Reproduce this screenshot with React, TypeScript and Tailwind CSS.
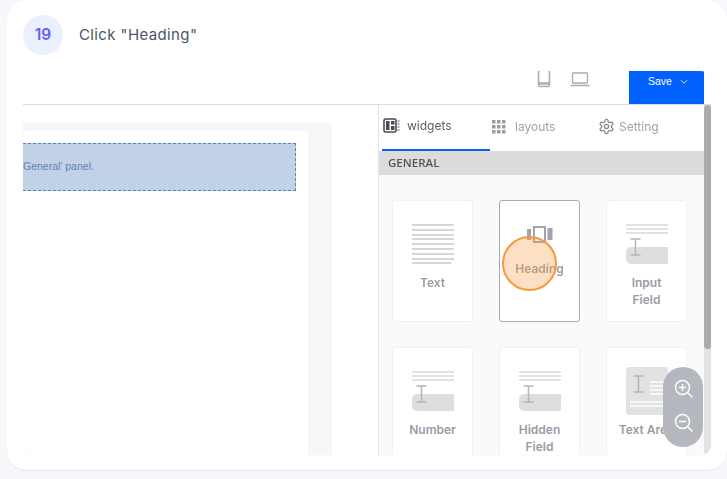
import React from "react";

const labelFont = "font-['Inter',sans-serif] font-semibold text-[12px] leading-[17px] text-[#9b9ba6]";

const Lines: React.FC<{ count: number; color?: string; className?: string }> = ({ count, color, className }) => (
  <div className={`flex flex-col gap-[2px] ${className ?? ""}`}>
    {Array.from({ length: count }).map((_, i) => (
      <div key={i} className={`h-[2px] ${color ?? "bg-[#e2e2e2]"}`} />
    ))}
  </div>
);

const Cursor: React.FC<{ className?: string }> = ({ className }) => (
  <svg width="11" height="18" viewBox="0 0 11 18" className={className}>
    <path d="M0.5 1h10M0.5 17h10M5.5 1v16" stroke="#b5b5b5" strokeWidth="1.5" fill="none" />
  </svg>
);

const TextIcon: React.FC = () => (
  <div className="w-[42px] h-[43px]">
    <div className="flex flex-col gap-[2.8px]">
      {Array.from({ length: 8 }).map((_, i) => (
        <div key={i} className="h-[2px] w-full bg-[#d6d6d6]" />
      ))}
      <div className="h-[2px] w-[39px] bg-[#d6d6d6]" />
    </div>
  </div>
);

const HeadingIcon: React.FC = () => (
  <svg width="26" height="17" viewBox="0 0 26 17">
    <rect x="0" y="3" width="4" height="11" fill="#a3a3af" />
    <rect x="7" y="1" width="11" height="15" fill="#fff" stroke="#a3a3af" strokeWidth="2" />
    <rect x="20.5" y="2" width="5" height="12" fill="#a3a3af" />
  </svg>
);

const InputIcon: React.FC = () => (
  <div className="relative w-[42px] h-[40px]">
    <Lines count={3} />
    <div className="absolute left-0 right-0 bottom-0 h-[17px] rounded-l-[5px] bg-[#dedede]" />
    <Cursor className="absolute left-[4px] top-[14px]" />
  </div>
);

const TextAreaIcon: React.FC = () => (
  <div className="relative w-[42px] h-[48px] -mt-[4px] rounded-[3px] bg-[#e2e2e2] overflow-hidden">
    <Cursor className="absolute left-[7px] top-[8px]" />
    <div className="absolute left-[24px] right-0 top-[14px]">
      <Lines count={4} color="bg-[#f7f7f7]" />
    </div>
    <div className="absolute left-[4px] right-0 top-[34px]">
      <Lines count={2} color="bg-[#f7f7f7]" />
    </div>
  </div>
);

const WidgetCard: React.FC<{
  label: React.ReactNode;
  active?: boolean;
  icon: React.ReactNode;
}> = ({ label, active, icon }) => (
  <div
    className={`relative h-[122px] rounded-[3px] bg-white flex flex-col items-center text-center ${
      active ? "border border-[#a9a9b3]" : "border border-[#f0f0f5]"
    }`}
  >
    <div className={`flex justify-center ${active ? "h-[17px] mt-[25px]" : "h-[43px] mt-[23px]"}`}>{icon}</div>
    <div className={`${labelFont} ${active ? "mt-[17px]" : "mt-[7px]"}`}>{label}</div>
  </div>
);

export default function App() {
  return (
    <div className="w-[727px] h-[479px] overflow-hidden bg-[#f7f8fb] pl-[7px]">
      {/* Step card */}
      <div className="w-[720px] h-[471px] rounded-[20px] bg-white border-b border-[#e8e9ee] pl-[16px] pt-[15px] shadow-[0_0_2px_rgba(0,0,0,0.05)]">
        {/* Step header */}
        <div className="flex items-center gap-[16px] h-[40px]">
          <div className="w-[40px] h-[40px] rounded-full bg-[#eceffe] flex items-center justify-center font-['Inter',sans-serif] font-semibold text-[15.5px] text-[#5f63f2]">
            19
          </div>
          <div className="font-['Inter',sans-serif] text-[15px] text-[#4b5568] tracking-[0.38px]">
            Click "Heading"
          </div>
        </div>

        {/* Screenshot */}
        <div className="relative mt-[16px] w-[688px] h-[384px] overflow-hidden rounded-[10px] bg-white shadow-[0_0_2px_rgba(0,0,0,0.07)] blur-[0.35px]">
          {/* Top bar */}
          <div className="flex justify-end h-[34px] border-b border-[#dedee0]">
            <div className="flex items-start gap-[19px] mr-[39px]">
              <svg width="14" height="18" viewBox="0 0 14 18" className="-mt-[1px]">
                <rect x="1.5" y="0" width="11" height="16.5" rx="2" fill="none" stroke="#a9adb8" strokeWidth="1.6" />
                <path d="M1.5 13.5h11" stroke="#a9adb8" strokeWidth="2.5" />
              </svg>
              <svg width="20" height="15" viewBox="0 0 20 15" className="mt-[1px]">
                <rect x="2.5" y="1" width="15" height="10" rx="1" fill="none" stroke="#a9adb8" strokeWidth="1.4" />
                <path d="M0.5 13.5h19" stroke="#a9adb8" strokeWidth="1.4" />
              </svg>
            </div>
            <div className="w-[75px] h-[33px] mr-[7px] bg-[#0061ff] flex items-center justify-center gap-[8px] pl-[3px] pb-[12px] font-['Liberation_Sans',sans-serif] text-[10.5px] text-white">
              <span>Save</span>
              <svg width="8" height="6" viewBox="0 0 8 6">
                <path d="M1 1.2l3 3 3-3" stroke="#d5e4ff" strokeWidth="1" fill="none" />
              </svg>
            </div>
          </div>

          <div className="flex h-[350px]">
            {/* Canvas */}
            <div className="w-[356px] pt-[18px] border-r border-[#e4e4e6]">
              <div className="w-[309px] h-[332px] bg-[#f5f6f8] pt-[8px] rounded-tr-[2px]">
                <div className="w-[285px] h-[324px] bg-white pt-[12px]">
                  <div className="w-[273px] h-[48px] bg-[#c2d2e6] border border-dashed border-[#4f86c9] border-l-0 flex items-center font-['Liberation_Sans',sans-serif] text-[10.5px] text-[#5b80b8]">
                    General' panel.
                  </div>
                </div>
              </div>
            </div>

            {/* Widgets panel */}
            <div className="w-[325px] flex flex-col">
              <div className="flex h-[46px] shrink-0 font-['Inter',sans-serif] text-[12px]">
                <div className="w-[111px] h-[46px] pl-[3px]">
                  <div className="w-[108px] h-[46px] border-b-2 border-[#0061ff] flex items-center gap-[7px] pl-[1px] pb-[3px] text-[#5f6068]">
                    <svg width="17" height="15" viewBox="0 0 17 15">
                      <rect x="1" y="1" width="12" height="13" rx="1.5" fill="none" stroke="#4b4b55" strokeWidth="1.6" />
                      <path d="M3 3h3.5v9H3zM8 3h3.5v3.5H8zM8 8h3.5v4H8z" fill="#4b4b55" />
                      <path d="M14.5 3h2M14.5 6h2M14.5 9h2M14.5 12h2" stroke="#4b4b55" strokeWidth="1.2" />
                    </svg>
                    widgets
                  </div>
                </div>
                <div className="w-[108px] h-[46px] flex items-center gap-[9px] pl-[2px] pb-[3px] text-[#a0a2ab]">
                  <svg width="14" height="14" viewBox="0 0 14 14" fill="#9a9ca5">
                    <path d="M0 0h3.5v3.5H0zM5 0h3.5v3.5H5zM10 0h3.5v3.5H10zM0 5h3.5v3.5H0zM5 5h3.5v3.5H5zM10 5h3.5v3.5H10zM0 10h3.5v3.5H0zM5 10h3.5v3.5H5zM10 10h3.5v3.5H10z" />
                  </svg>
                  layouts
                </div>
                <div className="h-[46px] flex items-center gap-[4px] pb-[3px] text-[#a0a2ab]">
                  <svg width="17" height="17" viewBox="0 0 24 24" fill="none" stroke="#85878f" strokeWidth="1.8" strokeLinecap="round" strokeLinejoin="round">
                    <path d="M12.22 2h-.44a2 2 0 0 0-2 2v.18a2 2 0 0 1-1 1.73l-.43.25a2 2 0 0 1-2 0l-.15-.08a2 2 0 0 0-2.73.73l-.22.38a2 2 0 0 0 .73 2.73l.15.1a2 2 0 0 1 1 1.72v.51a2 2 0 0 1-1 1.74l-.15.09a2 2 0 0 0-.73 2.73l.22.38a2 2 0 0 0 2.73.73l.15-.08a2 2 0 0 1 2 0l.43.25a2 2 0 0 1 1 1.73V20a2 2 0 0 0 2 2h.44a2 2 0 0 0 2-2v-.18a2 2 0 0 1 1-1.73l.43-.25a2 2 0 0 1 2 0l.15.08a2 2 0 0 0 2.73-.73l.22-.39a2 2 0 0 0-.73-2.73l-.15-.08a2 2 0 0 1-1-1.74v-.5a2 2 0 0 1 1-1.74l.15-.09a2 2 0 0 0 .73-2.73l-.22-.38a2 2 0 0 0-2.73-.73l-.15.08a2 2 0 0 1-2 0l-.43-.25a2 2 0 0 1-1-1.73V4a2 2 0 0 0-2-2z" />
                    <circle cx="12" cy="12" r="3" />
                  </svg>
                  Setting
                </div>
              </div>

              <div className="h-[24px] shrink-0 bg-[#dcdcdc] flex items-center pl-[9px] font-['Open_Sans',sans-serif] font-semibold text-[11.5px] text-[#55565c]">
                GENERAL
              </div>

              {/* Widget grid */}
              <div className="flex-1 bg-[#fafafa] pt-[25px] px-[13px]">
                <div className="w-[295px] grid grid-cols-3 gap-x-[26px] gap-y-[25px]">
                  <WidgetCard label="Text" icon={<TextIcon />} />
                  <WidgetCard label="Heading" active icon={<HeadingIcon />} />
                  <WidgetCard label={<>Input<br />Field</>} icon={<InputIcon />} />
                  <WidgetCard label="Number" icon={<InputIcon />} />
                  <WidgetCard label={<>Hidden<br />Field</>} icon={<InputIcon />} />
                  <WidgetCard label="Text Area" icon={<TextAreaIcon />} />
                </div>
              </div>
            </div>

            {/* Scrollbar */}
            <div className="w-[7px] bg-[#e2e2e2] rounded-b-[4px]">
              <div className="h-[244px] bg-[#ababab] rounded-[4px]" />
            </div>
          </div>

          {/* Click highlight */}
          <div className="absolute left-[479px] top-[165px] w-[55px] h-[55px] rounded-full bg-[#f7983c]/30 border-2 border-[#f7983c]" />

          {/* Zoom controls */}
          <div className="absolute left-[640px] top-[296px] w-[40px] h-[80px] rounded-full bg-[#b4b7bd] flex flex-col items-center justify-center gap-[15px] pb-[3px]">
            <svg width="19" height="19" viewBox="0 0 19 19" fill="none" stroke="#fff" strokeWidth="1.5" strokeLinecap="round">
              <circle cx="8.5" cy="8.5" r="7" />
              <path d="M14 14l4 4M5.5 8.5h6M8.5 5.5v6" />
            </svg>
            <svg width="19" height="19" viewBox="0 0 19 19" fill="none" stroke="#fff" strokeWidth="1.5" strokeLinecap="round">
              <circle cx="8.5" cy="8.5" r="7" />
              <path d="M14 14l4 4M5.5 8.5h6" />
            </svg>
          </div>
        </div>
      </div>
    </div>
  );
}
